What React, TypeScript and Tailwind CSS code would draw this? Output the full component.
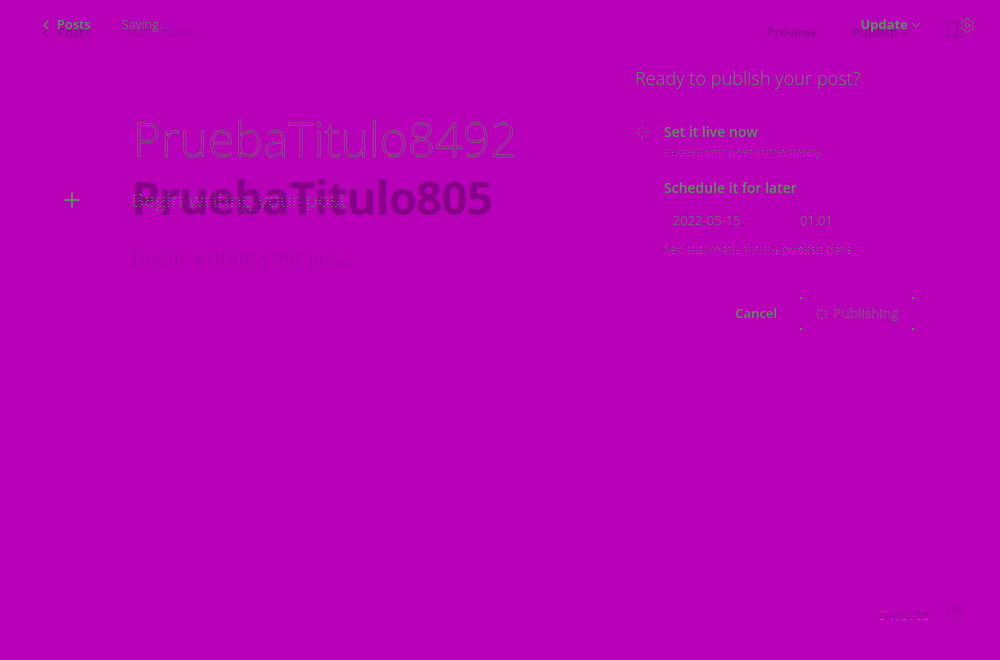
import React from 'react';
import { ChevronLeft, ChevronDown, Plus, Settings, PanelRight, HelpCircle, Loader } from 'lucide-react';

const sans = "font-['Open_Sans','Noto_Sans',sans-serif]";

// only scattered pixels of the glyphs are left, the way the reference shows small text
const dotted =
  'bg-[repeating-conic-gradient(#5f8a62_0_25%,transparent_0_50%)] bg-[length:4px_3px] bg-clip-text text-transparent';
const sparse =
  'bg-[linear-gradient(to_bottom,transparent_4px,#5f8a62_4px,#5f8a62_5px,transparent_5px,transparent_12px,#5f8a62_12px,#5f8a62_13px,transparent_13px)] bg-clip-text text-transparent';
const stems = '[-webkit-text-stroke:0.3px_#5f8a62] text-transparent';

const Base: React.FC = () => (
  <div className={`flex h-[660px] w-[1000px] flex-col text-[#8a0094] ${sans}`}>
    <header className="flex h-[66px] items-center pl-[38px] pr-[36px]">
      <ChevronLeft className="h-4 w-4" strokeWidth={2} />
      <span className="ml-[3px] text-[13px] font-semibold">Posts</span>
      <span className="ml-[31px] text-[13px] text-[#a200a8]">Draft - Saved</span>
      <span className="ml-auto text-[13px] font-semibold">Preview</span>
      <span className="ml-[36px] text-[13px] font-semibold">Publish</span>
      <ChevronDown className="h-4 w-4" />
      <PanelRight className="mb-2 ml-[31px] h-[19px] w-[19px]" strokeWidth={1.5} />
    </header>
    <main className="flex-1 pl-[131px] pt-[102px]">
      <h1 className="text-[46px] font-bold leading-[58px] tracking-[-1.05px] text-[#870089]">PruebaTitulo805</h1>
      <p className="mt-[17px] font-['Liberation_Serif',serif] text-[22.5px] leading-[30px] text-[#a600aa]">Begin writing your post...</p>
    </main>
    <footer className="flex h-[55px] items-start justify-end pr-[38px] text-sm text-[#a000a4]">
      <span>0 words</span>
      <HelpCircle className="ml-[15px] h-4 w-4" />
    </footer>
  </div>
);

const Overlay: React.FC = () => (
  <div className={`absolute inset-0 text-[#5f8a62] ${sans}`}>
    <div className="flex h-[50px] items-center pl-[38px] pr-[24px]">
      <ChevronLeft className="h-4 w-4" strokeWidth={2} />
      <span className="ml-[3px] text-[13px] font-semibold">Posts</span>
      <span className="ml-[31px] text-[13px] font-light">Saving...</span>
      <span className="ml-auto text-[13px] font-bold">Update</span>
      <ChevronDown className="h-4 w-4" strokeWidth={1.5} />
      <Settings className="ml-[35px] h-[17px] w-[17px]" strokeWidth={1.25} />
    </div>
    <div className="flex">
      <div className="w-[634px] pl-[60px] pt-[60px]">
        <h1 className="pl-[73px] text-[48px] font-light leading-[58px] [-webkit-text-stroke:0.5px_#5f8a62] text-transparent">PruebaTitulo8492</h1>
        <div className="mt-[18px] flex items-center">
          <Plus className="h-6 w-6" strokeWidth={2} />
          <span className={`ml-[47px] text-[20px] leading-[28px] ${dotted}`}>Begin writing your post</span>
        </div>
      </div>
      <div className="w-[290px] pt-[16px]">
        <h2 className="ml-[1px] text-[18.2px] font-light leading-[24px]">Ready to publish your post?</h2>
        <div className="mt-[32px] flex">
          <div className="w-[30px] pt-[3px] pl-[1px]">
            <Loader className="h-[15px] w-[15px]" strokeWidth={1} />
          </div>
          <div className="w-[240px]">
            <div className="text-sm font-semibold leading-[20px]">Set it live now</div>
            <div className={`mt-[2px] w-fit text-[11.5px] leading-[16px] ${dotted}`}>Publish this post immediately</div>
            <div className="mt-[18px] text-sm font-semibold leading-[20px]">Schedule it for later</div>
            <div className="mt-[12px] flex pl-[9px] text-[13px] font-light leading-[20px]">
              <span className="w-[127px]">2022-05-15</span>
              <span>01:01</span>
            </div>
            <div className={`mt-[12px] w-fit text-xs leading-[16px] ${dotted}`}>Set automatic future publish date</div>
          </div>
        </div>
        <div className="mt-[39px] flex items-center justify-end pr-[10px]">
          <span className="text-[13px] font-semibold">Cancel</span>
          <div className="relative ml-[23px] flex h-[33px] w-[114px] items-center justify-center gap-[4px]">
            <span className="absolute left-0 top-0 h-[2px] w-[2px] bg-[#5f8a62]" />
            <span className="absolute right-0 top-0 h-[2px] w-[2px] bg-[#5f8a62]" />
            <span className="absolute bottom-0 left-0 h-[2px] w-[2px] bg-[#5f8a62]" />
            <span className="absolute bottom-0 right-0 h-[2px] w-[2px] bg-[#5f8a62]" />
            <Loader className="h-[14px] w-[14px]" strokeWidth={1.5} />
            <span className={`text-[13.5px] ${stems}`}>Publishing</span>
          </div>
        </div>
      </div>
    </div>
    <div className={`absolute bottom-[37px] right-[70px] text-sm leading-[16px] ${sparse}`}>0 words</div>
  </div>
);

const App: React.FC = () => (
  <div className="relative h-[660px] w-[1000px] overflow-hidden bg-[#b800b8]">
    <Base />
    <Overlay />
  </div>
);

export default App;
